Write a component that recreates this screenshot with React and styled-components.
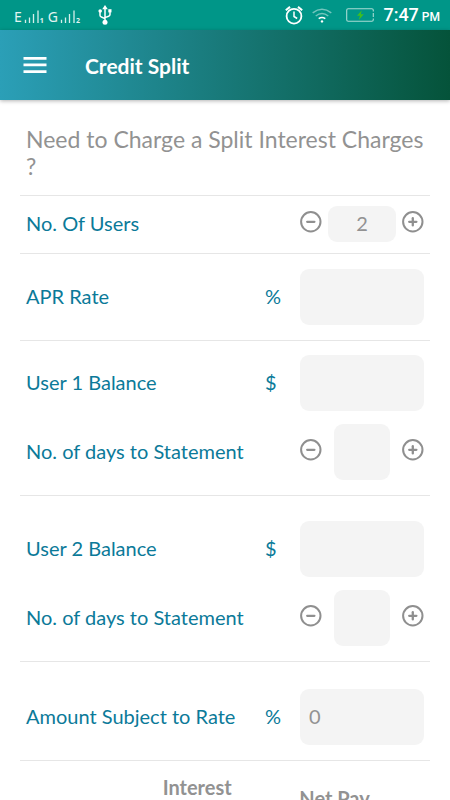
import { useState } from "react";
import styled, { createGlobalStyle } from "styled-components";

export default function App() {
  const [users, setUsers] = useState(2);
  const [apr, setApr] = useState("");

  return (
    <Page>
      <GlobalStyle />
      <StatusBar>
        <Carrier>
          <SignalText />
          <UsbIcon />
        </Carrier>
        <StatusRight>
          <AlarmIcon />
          <WifiIcon />
          <BatteryIcon />
          <Clock>
            7:47 <Meridiem>PM</Meridiem>
          </Clock>
        </StatusRight>
      </StatusBar>

      <TopBar>
        <MenuButton type="button" aria-label="Open menu">
          <MenuIcon />
        </MenuButton>
        <Title>Credit Split</Title>
      </TopBar>

      <Content>
        <Question>Need to Charge a Split Interest Charges ?</Question>

        <Section $top={10} $bottom={11}>
          <Row>
            <Label htmlFor="users">No. Of Users</Label>
            <Stepper
              id="users"
              wide
              value={users}
              onChange={(v) => setUsers(v)}
            />
          </Row>
        </Section>

        <Section $top={15} $bottom={15}>
          <Row>
            <Label htmlFor="apr">APR Rate</Label>
            <Unit>%</Unit>
            <Field id="apr" value={apr} onChange={(e) => setApr(e.target.value)} />
          </Row>
        </Section>

        <UserSection number={1} top={14} />
        <UserSection number={2} top={25} />

        <Section $top={27} $bottom={15}>
          <Row>
            <Label htmlFor="subject">Amount Subject to Rate</Label>
            <Unit>%</Unit>
            <Field id="subject" placeholder="0" />
          </Row>
        </Section>

        <Results>
          <thead>
            <tr>
              <HeadCell />
              <HeadCell scope="col">Interest</HeadCell>
              <HeadCell scope="col" $valign="middle">Net Pay</HeadCell>
            </tr>
          </thead>
        </Results>
      </Content>
    </Page>
  );
}

function UserSection({ number, top }) {
  const [balance, setBalance] = useState("");
  const [days, setDays] = useState("");

  return (
    <Section $top={top} $bottom={15}>
      <Row>
        <Label htmlFor={`balance${number}`}>User {number} Balance</Label>
        <Unit>$</Unit>
        <Field
          id={`balance${number}`}
          value={balance}
          onChange={(e) => setBalance(e.target.value)}
        />
      </Row>
      <Row>
        <Label htmlFor={`days${number}`}>No. of days to Statement</Label>
        <Stepper id={`days${number}`} value={days} onChange={(v) => setDays(v)} />
      </Row>
    </Section>
  );
}

function Stepper({ id, value, onChange, wide }) {
  return (
    <StepperBox>
      <RoundButton
        type="button"
        aria-label="Decrease"
        onClick={() => onChange(Math.max(0, Number(value) - 1))}
      >
        <CircleIcon />
      </RoundButton>
      <CountField
        id={id}
        $wide={wide}
        value={value}
        onChange={(e) => onChange(e.target.value)}
      />
      <RoundButton
        type="button"
        aria-label="Increase"
        onClick={() => onChange(Number(value) + 1)}
      >
        <CircleIcon plus />
      </RoundButton>
    </StepperBox>
  );
}

/* Icons */
function CircleIcon({ plus }) {
  return (
    <svg width="22" height="22" viewBox="0 0 22 22" fill="none" stroke="#8f8f8f" strokeWidth="2">
      <circle cx="10.8" cy="10.8" r="9.7" />
      <path d="M7.2 10.8h7.2" strokeWidth="2.3" strokeLinecap="round" />
      {plus && <path d="M10.8 7.2v7.2" strokeWidth="2.3" strokeLinecap="round" />}
    </svg>
  );
}

function MenuIcon() {
  return (
    <svg width="24" height="18" viewBox="0 0 24 18" fill="#fff">
      <path d="M.5 1h23v2.7H.5zM.5 7.6h23v2.7H.5zM.5 14.2h23v2.7H.5z" />
    </svg>
  );
}

function Bars() {
  return (
    <svg width="16" height="14" viewBox="0 0 16 14" stroke="#d5eeea" strokeWidth="1.3">
      <path d="M1.5 13V9.8M5.5 13V7.5M9.5 13V4M14 13V.5" />
    </svg>
  );
}

function SignalText() {
  return (
    <Signal>
      E<Bars />
      <Sim>1</Sim>
      <SecondSim>G</SecondSim>
      <Bars />
      <Sim>2</Sim>
    </Signal>
  );
}

function UsbIcon() {
  return (
    <svg width="14" height="20" viewBox="0 0 14 20" fill="none" stroke="#fff" strokeWidth="1.5">
      <path d="M7 3v13M2 7v3.2q0 1.4 1.4 1.8L7 13.6M12 7v2.5q0 1.4-1.4 1.8L7 12.6" />
      <circle cx="7" cy="17.3" r="2.5" fill="#fff" stroke="none" />
      <path d="M7 0l2.8 4.2H4.2z" fill="#fff" stroke="none" />
      <circle cx="2.2" cy="6" r="1.8" fill="#fff" stroke="none" />
      <path d="M10.3 4.2h3.2v3.2h-3.2z" fill="#fff" stroke="none" />
    </svg>
  );
}

function AlarmIcon() {
  return (
    <svg width="18" height="19" viewBox="0 0 18 19" fill="none" stroke="#fff" strokeWidth="1.8">
      <circle cx="9" cy="10.2" r="7.4" />
      <path d="M9 5.5v5l3.2 2" strokeWidth="1.5" />
      <path d="M.8 4.2L5 .9M17.2 4.2L13 .9" strokeWidth="2" />
    </svg>
  );
}

function WifiIcon() {
  return (
    <svg width="20" height="15" viewBox="0 0 20 15" fill="none" stroke="#fff" strokeWidth="1.5">
      <path d="M.7 4.8q9.3-7 18.6 0M3.7 8q6.3-4.8 12.6 0" opacity="0.45" />
      <path d="M6.7 10.7q3.3-2.4 6.6 0" />
      <circle cx="10" cy="13.4" r="1.2" fill="#fff" stroke="none" />
    </svg>
  );
}

function BatteryIcon() {
  return (
    <svg width="28" height="14" viewBox="0 0 28 14" fill="none">
      <path
        d="M27.3 3.5V2.2Q27.3.7 25.8.7H2.2Q.7.7.7 2.2v9.6q0 1.5 1.5 1.5h23.6q1.5 0 1.5-1.5v-1.3M27.3 5v4"
        stroke="#a9dbd4"
        strokeWidth="1.1"
      />
      <path d="M15.8 2.2L11 7.7h3l-1.2 4.3 5-5.8h-3z" fill="#3fbf1f" />
    </svg>
  );
}

/* Styles */
const GlobalStyle = createGlobalStyle`
  * {
    box-sizing: border-box;
  }

  body {
    margin: 0;
    background: #fff;
    font-family: Lato, "Liberation Sans", sans-serif;
  }
`;

const Page = styled.div`
  display: flex;
  flex-direction: column;
  height: 100vh;
  overflow: hidden;
`;

const StatusBar = styled.div`
  display: flex;
  flex: none;
  align-items: center;
  justify-content: space-between;
  height: 30px;
  padding: 0 10px 0 14px;
  background: #009688;
  color: #fff;
  font-family: Roboto, sans-serif;
`;

const Carrier = styled.div`
  display: flex;
  align-items: center;
  gap: 18px;
`;

const Signal = styled.div`
  display: flex;
  align-items: center;
  color: #e2f4f1;
  font-family: "Noto Sans", sans-serif;
  font-size: 14px;
  line-height: 16px;
  padding-top: 3px;

  svg {
    margin-left: 2px;
  }
`;

const Sim = styled.span`
  align-self: flex-end;
  font-size: 7px;
  font-weight: 700;
  line-height: 8px;
`;

const SecondSim = styled.span`
  margin-left: 4px;
`;

const StatusRight = styled.div`
  display: flex;
  align-items: center;
  gap: 9px;

  svg:nth-of-type(3) {
    margin-left: 5px;
  }
`;

const Clock = styled.span`
  display: flex;
  align-items: baseline;
  gap: 3px;
  font-size: 18px;
  font-weight: 500;
  line-height: 24px;
  padding-top: 2px;
  white-space: nowrap;
`;

const Meridiem = styled.small`
  font-size: 12px;
`;

const TopBar = styled.header`
  display: flex;
  flex: none;
  align-items: center;
  gap: 38px;
  height: 70px;
  padding: 2px 23px 0;
  background: linear-gradient(90deg, #2b9fb7, #05533a);
  box-shadow: 0 1px 4px rgba(0, 0, 0, 0.3);
  z-index: 1;
`;

const MenuButton = styled.button`
  display: flex;
  padding: 0 0 2px;
  border: none;
  background: none;
  cursor: pointer;
`;

const Title = styled.h1`
  margin: 0;
  color: #fff;
  font-size: 21px;
  font-weight: 700;
  line-height: 28px;
`;

const Content = styled.main`
  flex: 1;
  min-height: 0;
  padding: 0 20px;
  overflow-y: auto;
  scrollbar-width: none;
`;

const Question = styled.p`
  margin: 0;
  padding: 26px 6px 15px;
  color: #929292;
  font-size: 23px;
  line-height: 27px;
`;

const Section = styled.section`
  display: flex;
  flex-direction: column;
  gap: 13px;
  padding: ${({ $top, $bottom }) => `${$top}px 6px ${$bottom}px`};
  border-top: 1px solid #e6e6e6;
`;

const Row = styled.div`
  display: flex;
  align-items: center;
`;

const Label = styled.label`
  flex: 1;
  padding-bottom: 2px;
  color: #0b7a99;
  font-size: 20px;
  line-height: 24px;
  white-space: nowrap;
`;

const Unit = styled.span`
  width: 35px;
  padding-bottom: 2px;
  color: #0b7a99;
  font-size: 20px;
  line-height: 24px;
`;

const Field = styled.input`
  width: 124px;
  height: 56px;
  padding: 0 9px 2px;
  border: none;
  border-radius: 9px;
  outline: none;
  background: #f4f4f4;
  color: #929292;
  font-family: inherit;
  font-size: 20px;

  &::placeholder {
    color: #929292;
    opacity: 1;
  }
`;

const StepperBox = styled.div`
  display: flex;
  align-items: center;
  justify-content: space-between;
  width: 124px;
`;

const CountField = styled(Field)`
  width: ${({ $wide }) => ($wide ? "68px" : "56px")};
  height: ${({ $wide }) => ($wide ? "36px" : "56px")};
  text-align: center;
`;

const RoundButton = styled.button`
  display: flex;
  padding: 0 0 4px;
  border: none;
  background: none;
  cursor: pointer;
`;

const Results = styled.table`
  width: 100%;
  table-layout: fixed;
  border-collapse: collapse;
  border-top: 1px solid #e6e6e6;
`;

const HeadCell = styled.th`
  height: 74px;
  padding: 14px 6px;
  color: #929292;
  font-size: 20px;
  font-weight: 700;
  line-height: 24px;
  text-align: left;
  vertical-align: ${({ $valign }) => $valign || "top"};
`;
